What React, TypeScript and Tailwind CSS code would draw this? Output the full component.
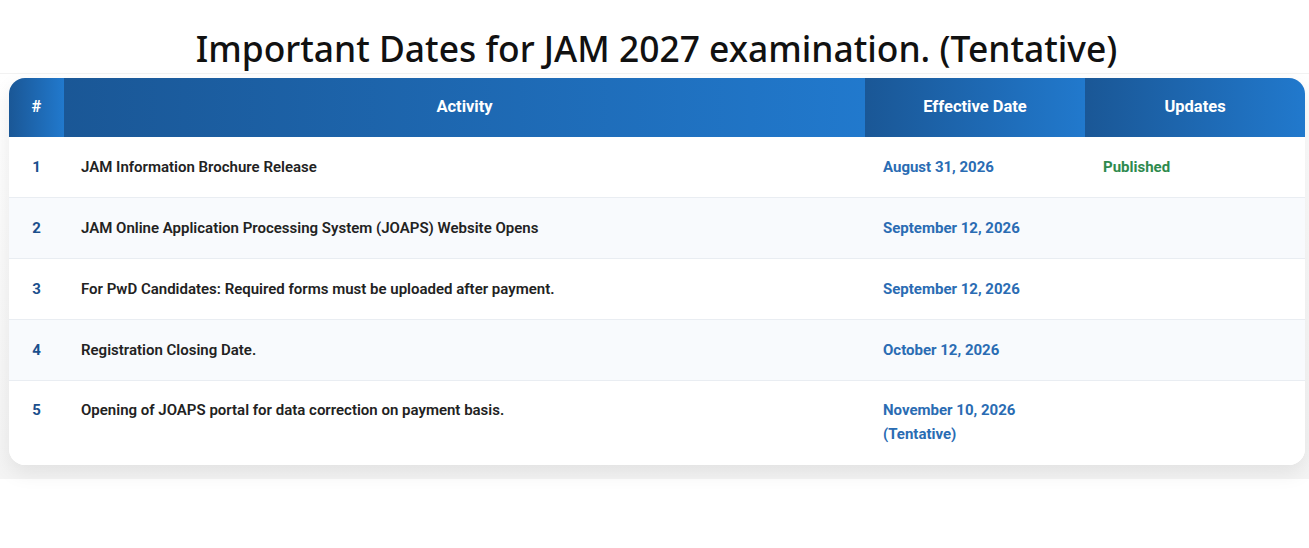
const rows = [
  { n: 1, activity: "JAM Information Brochure Release", date: ["August 31, 2026"], update: "Published" },
  { n: 2, activity: "JAM Online Application Processing System (JOAPS) Website Opens", date: ["September 12, 2026"] },
  { n: 3, activity: "For PwD Candidates: Required forms must be uploaded after payment.", date: ["September 12, 2026"] },
  { n: 4, activity: "Registration Closing Date.", date: ["October 12, 2026"] },
  { n: 5, activity: "Opening of JOAPS portal for data correction on payment basis.", date: ["November 10, 2026", "(Tentative)"] },
];

const headCell = "bg-gradient-to-r from-[#1a5796] to-[#2179cd] h-[59px] flex items-center justify-center text-white text-[16.5px] font-bold";

export default function App() {
  return (
    <div className="w-[1309px] h-[548px] bg-white font-['Roboto',sans-serif]">
      <h1 className="pt-[25px] pl-[4px] h-[73px] text-center text-[35.4px] leading-[46px] font-medium text-[#111] font-['Noto_Sans',sans-serif]">
        Important Dates for JAM 2027 examination. (Tentative)
      </h1>
      <div className="pt-[4px] pl-[9px] pr-[4px] pb-[14px] border-t border-[#f2f2f2] bg-gradient-to-b from-white to-[#f4f4f4]">
        <div className="rounded-[16px] bg-white overflow-hidden shadow-[0_8px_20px_rgba(0,0,0,0.08)]">
          <div className="grid grid-cols-[55px_801px_220px_220px]">
            <div className={headCell}>#</div>
            <div className={headCell}>Activity</div>
            <div className={headCell}>Effective Date</div>
            <div className={headCell}>Updates</div>
          </div>
          {rows.map((r, i) => (
            <div
              key={r.n}
              className={
                "grid grid-cols-[55px_801px_220px_220px] text-[15px] font-semibold leading-[24px] " +
                (i % 2 === 1 ? "bg-[#f8fafd] " : "bg-white ") +
                (i < rows.length - 1 ? "border-b border-[#e9edf2] h-[61px] items-center" : "h-[84px] items-start pt-[17px]")
              }
            >
              <div className="text-center text-[#1b4f8c] font-bold">{r.n}</div>
              <div className="pl-[17px] text-[#222]">{r.activity}</div>
              <div className="pl-[18px] text-[#2a6cb3] font-bold">
                {r.date.map((d) => (
                  <div key={d}>{d}</div>
                ))}
              </div>
              <div className="pl-[18px] text-[#2e8a4e] font-bold">{r.update}</div>
            </div>
          ))}
        </div>
      </div>
    </div>
  );
}
